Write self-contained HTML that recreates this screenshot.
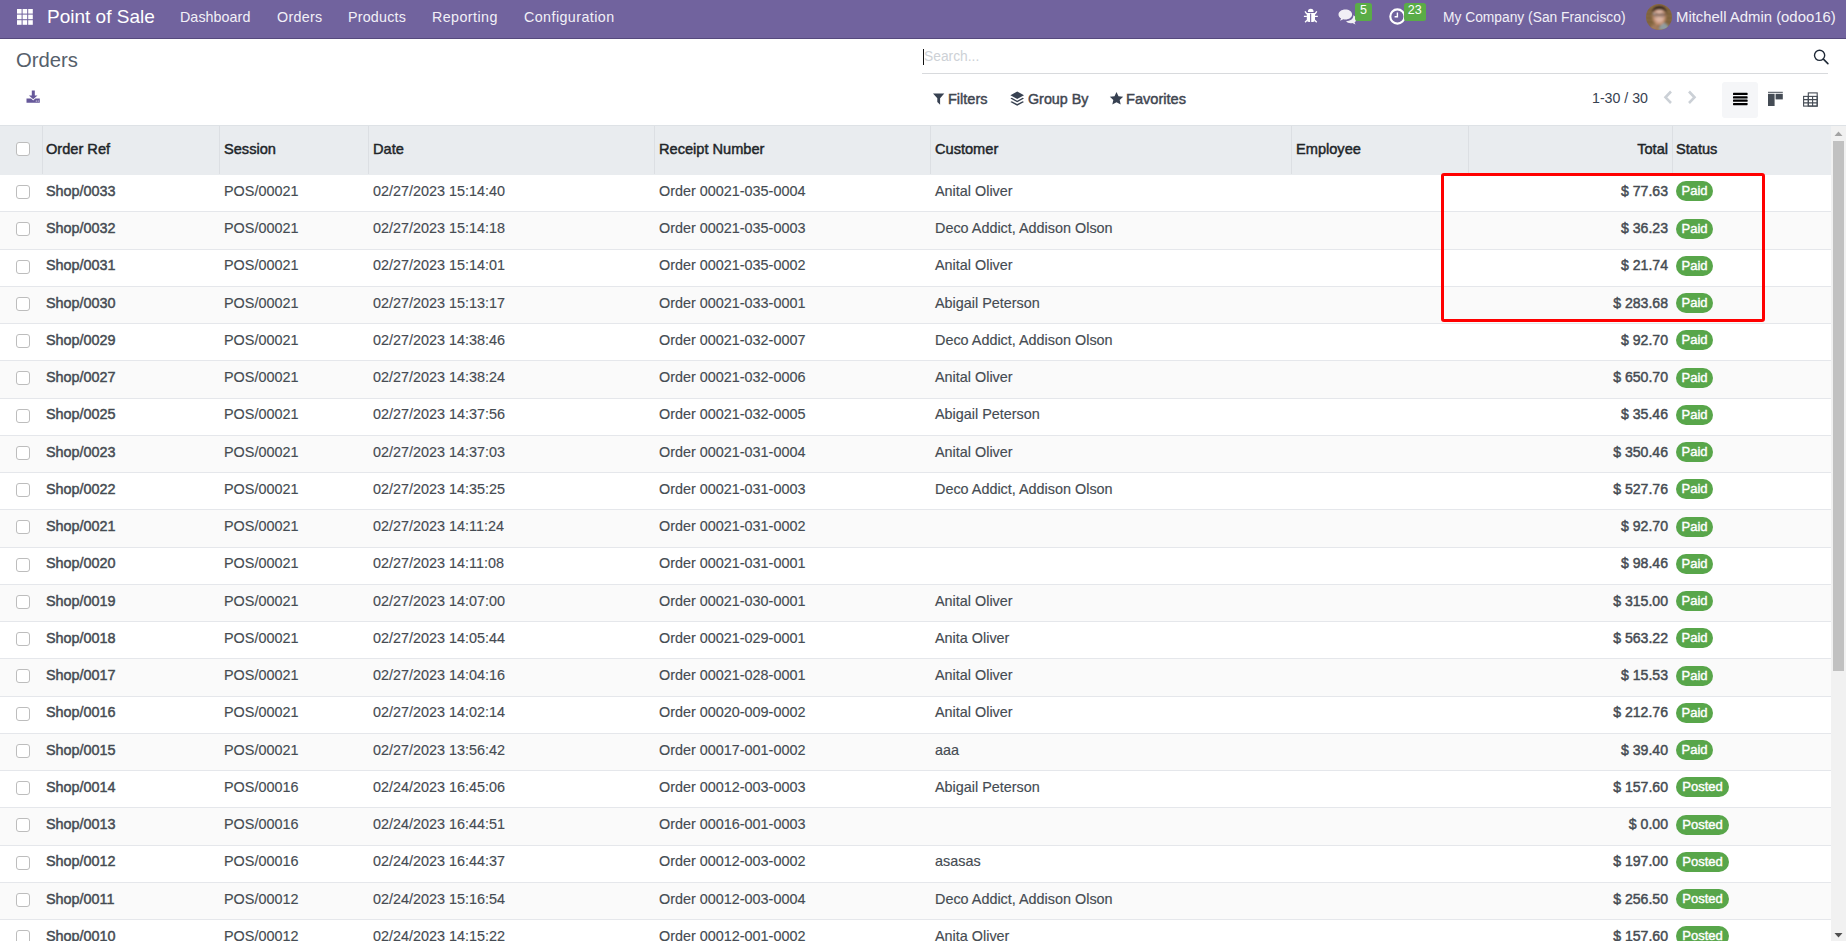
<!DOCTYPE html><html><head><meta charset="utf-8"><style>
*{box-sizing:border-box;margin:0;padding:0}
html,body{width:1846px;height:941px;overflow:hidden;background:#fff;font-family:"Liberation Sans",sans-serif;color:#374151}
.abs{position:absolute}
.nav{position:absolute;left:0;top:0;width:1846px;height:39px;background:#71639e;border-bottom:1px solid #55497d}
.nt{position:absolute;color:#fff;white-space:nowrap;line-height:1}
.cp{position:absolute;left:0;top:38px;width:1846px;height:87px;background:#fff}
.t{position:absolute;white-space:nowrap;line-height:1}
.hdr{position:absolute;left:0;top:125px;width:1831px;height:50px;background:#e9ecef;border-top:1px solid #dee2e6}
.hdiv{position:absolute;top:126px;height:48px;width:1px;background:#dcdfe3}
.row{position:absolute;left:0;width:1831px;border-bottom:1px solid #e5e7eb}
.cb{position:absolute;left:16px;width:14px;height:14px;border:1px solid #bdbdbd;border-radius:3px;background:#fff}
.c{position:absolute;white-space:nowrap;font-size:14.4px;line-height:1;color:#454b52;-webkit-text-stroke:0.15px #454b52}
.b{font-weight:700}
.m{font-weight:400;-webkit-text-stroke:0.45px currentColor}
.badge{position:absolute;left:1676px;height:20px;border-radius:10px;background:#58a64a;color:#fff;font-weight:400;-webkit-text-stroke:0.4px #fff;font-size:13px;line-height:20px;text-align:center}
</style></head><body>
<div class="nav">
<svg class="abs" style="left:17px;top:9px" width="16" height="16" viewBox="0 0 16 16" fill="#fff"><rect x="0.0" y="0.0" width="4.6" height="4.6"/><rect x="5.6" y="0.0" width="4.6" height="4.6"/><rect x="11.2" y="0.0" width="4.6" height="4.6"/><rect x="0.0" y="5.6" width="4.6" height="4.6"/><rect x="5.6" y="5.6" width="4.6" height="4.6"/><rect x="11.2" y="5.6" width="4.6" height="4.6"/><rect x="0.0" y="11.2" width="4.6" height="4.6"/><rect x="5.6" y="11.2" width="4.6" height="4.6"/><rect x="11.2" y="11.2" width="4.6" height="4.6"/></svg>
<div class="nt" style="left:47px;top:7px;font-size:19px">Point of Sale</div>
<div class="nt" style="left:180px;top:10px;font-size:14.3px;letter-spacing:0.05px;color:#f2f0f7">Dashboard</div>
<div class="nt" style="left:277px;top:10px;font-size:14.3px;letter-spacing:0.3px;color:#f2f0f7">Orders</div>
<div class="nt" style="left:348px;top:10px;font-size:14.3px;letter-spacing:0.2px;color:#f2f0f7">Products</div>
<div class="nt" style="left:432px;top:10px;font-size:14.3px;letter-spacing:0.42px;color:#f2f0f7">Reporting</div>
<div class="nt" style="left:524px;top:10px;font-size:14.3px;letter-spacing:0.42px;color:#f2f0f7">Configuration</div>
</div>
<div class="nav" style="background:transparent;border:none">
<svg class="abs" style="left:1300px;top:4px" width="22" height="22" viewBox="0 0 22 22" fill="#fff"><path d="M7.9 8.1a2.85 3.3 0 0 1 5.7 0z"/><path d="M6.8 8.9h8.2v6.9q0 2.2-2.2 2.2h-3.8q-2.2 0-2.2-2.2z"/><rect x="10.1" y="9.6" width="1.1" height="8.4" fill="#71639e"/><path d="M6.9 10L5 7.4M14.9 10l1.9-2.6M3.9 12.4h3M14.8 12.4h3M7 16.3l-1.9 2M14.8 16.3l1.9 2" stroke="#fff" stroke-width="1.3" fill="none"/></svg>
<svg class="abs" style="left:1338px;top:9px" width="19" height="16" viewBox="0 0 19 16"><path d="M7.3 0.5C3.5 0.5 0.5 2.7 0.5 5.5c0 1.6 1 3 2.6 3.9L2 11.8l3.4-1.6c0.6 0.1 1.2 0.2 1.9 0.2 3.8 0 6.8-2.2 6.8-5S11.1 0.5 7.3 0.5z" fill="#f1eff5"/><path d="M15.2 6.2c0.1 0.3 0.1 0.6 0.1 0.9 0 3.1-3.3 5.1-7.3 5.2 1 1.2 2.8 2 4.7 2 0.6 0 1.1-0.1 1.6-0.2l3.2 1.5-1-2.2c1.2-0.8 1.9-1.9 1.9-3.1 0-1.7-1.3-3.2-3.2-4.1z" fill="#f1eff5"/></svg>
<div class="abs" style="left:1355px;top:3px;width:17px;height:17.5px;background:#5aac47;border-radius:2.5px;color:#fff;font-size:12.5px;font-weight:400;text-align:center;line-height:15.5px">5</div>
<svg class="abs" style="left:1389px;top:8px" width="17" height="17" viewBox="0 0 17 17"><circle cx="8.4" cy="8.5" r="7.1" fill="none" stroke="#fff" stroke-width="2.1"/><path d="M8.4 4.5v4.3H5.6" fill="none" stroke="#fff" stroke-width="1.4"/></svg>
<div class="abs" style="left:1404px;top:3px;width:21.5px;height:17.5px;background:#5aac47;border-radius:2.5px;color:#fff;font-size:12.5px;text-align:center;line-height:15.5px">23</div>
<div class="nt" style="left:1443px;top:11px;font-size:13.8px;color:#f2f0f7">My Company (San Francisco)</div>
<svg class="abs" style="left:1646px;top:4px" width="26" height="26" viewBox="0 0 26 26"><defs><clipPath id="av"><circle cx="13" cy="13" r="13"/></clipPath><filter id="bl" x="-10%" y="-10%" width="120%" height="120%"><feGaussianBlur stdDeviation="0.9"/></filter></defs><g clip-path="url(#av)"><rect width="26" height="26" fill="#8a6b42"/><g filter="url(#bl)"><path d="M0 6h26M0 10h26M0 14h26M0 18h26M0 22h26" stroke="#6a5134" stroke-width="1"/><path d="M17 18c2 1 5 2 7 8H11z" fill="#8f9ca0"/><path d="M3 26c1-4 4-6 8-6l3 6z" fill="#a27a5c"/><ellipse cx="13.2" cy="12.6" rx="6.6" ry="8.6" fill="#c49276"/><ellipse cx="13.4" cy="12" rx="4.6" ry="6.5" fill="#dcb4a2"/><path d="M6.3 9.5C6 4.5 9 2.2 13.4 2.2S21 4.5 20.6 10c-1-2.8-3.2-4.4-7-4.4S7.6 7 6.3 9.5z" fill="#2f231d"/><path d="M7.2 10.6h12.6" stroke="#4a3a34" stroke-width="1"/><rect x="8.2" y="9.8" width="4.3" height="2.8" rx="1" fill="none" stroke="#5a463e" stroke-width="0.8"/><rect x="14" y="9.8" width="4.3" height="2.8" rx="1" fill="none" stroke="#5a463e" stroke-width="0.8"/><circle cx="8" cy="9.6" r="0.9" fill="#c8c8d0"/></g></g></svg>
<div class="nt" style="left:1676px;top:10px;font-size:14.9px;color:#f2f0f7">Mitchell Admin (odoo16)</div>
</div>
<div class="t" style="left:16px;top:50px;font-size:20.3px;color:#56606b">Orders</div>
<svg class="abs" style="left:26px;top:90px" width="14" height="13" viewBox="0 0 14 13" fill="#66589a"><rect x="5.8" y="0.5" width="3" height="5.5"/><path d="M2.9 5.6h8.6L7.2 9.2z"/><path d="M0.5 8.6h4.6l2.1 1.8 2.1-1.8h4.5v4.2H0.5z"/><circle cx="10.3" cy="11" r="0.6" fill="#fff"/><circle cx="12.2" cy="11" r="0.6" fill="#fff"/></svg>
<div class="abs" style="left:922px;top:73px;width:906px;height:1px;background:#d8dadd"></div>
<div class="abs" style="left:923px;top:49px;width:1px;height:16px;background:#111"></div>
<div class="t" style="left:924px;top:50px;font-size:13.8px;color:#cdd1d6">Search...</div>
<svg class="abs" style="left:1812px;top:48px" width="18" height="18" viewBox="0 0 18 18"><circle cx="7.6" cy="7.3" r="5.1" fill="none" stroke="#1f2937" stroke-width="1.4"/><path d="M11.4 11.1l4.5 4.5" stroke="#1f2937" stroke-width="1.6" stroke-linecap="round"/></svg>
<svg class="abs" style="left:933px;top:93px" width="12" height="12" viewBox="0 0 12 12" fill="#374151"><path d="M0 0.6h11.3L7.1 5.3v6.4L4.3 9.1V5.3z"/></svg>
<div class="t m" style="left:948px;top:92px;font-size:14.5px;color:#3f4650">Filters</div>
<svg class="abs" style="left:1010px;top:91px" width="15" height="16" viewBox="0 0 15 16" fill="#374151"><path d="M7.2 0.5l6.8 3.7-6.8 3.7L0.4 4.2z"/><path d="M1.8 6.8L7.2 9.7l5.4-2.9 1.4 0.8-6.8 3.7L0.4 7.6z"/><path d="M1.8 10.2l5.4 2.9 5.4-2.9 1.4 0.8-6.8 3.7L0.4 11z"/></svg>
<div class="t m" style="left:1028px;top:92px;font-size:14.3px;color:#3f4650">Group By</div>
<svg class="abs" style="left:1109px;top:91px" width="15" height="15" viewBox="0 0 24 24" fill="#374151"><path d="M12 1.5l3.2 6.9 7.5 0.8-5.6 5.1 1.6 7.4L12 17.9l-6.7 3.8 1.6-7.4-5.6-5.1 7.5-0.8z"/></svg>
<div class="t m" style="left:1126px;top:92px;font-size:14.6px;color:#3f4650">Favorites</div>
<div class="t" style="left:1592px;top:91px;font-size:14.2px;color:#374151">1-30 / 30</div>
<svg class="abs" style="left:1663px;top:90px" width="35" height="15" viewBox="0 0 35 15" fill="none" stroke="#cbd0d6" stroke-width="2.6"><path d="M8 1.5L2.5 7.3 8 13"/><path d="M26 1.5l5.5 5.8L26 13"/></svg>
<div class="abs" style="left:1722px;top:82px;width:36px;height:36px;background:#f5f6f8;border-radius:3px"></div>
<svg class="abs" style="left:1733px;top:92px" width="15" height="14" viewBox="0 0 15 14" fill="#000"><rect x="0" y="0.8" width="14.6" height="2.2" rx="0.6"/><rect x="0" y="4.3" width="14.6" height="2.2" rx="0.6"/><rect x="0" y="7.6" width="14.6" height="2.2" rx="0.6"/><rect x="0" y="11" width="14.6" height="2.2" rx="0.6"/></svg>
<svg class="abs" style="left:1767px;top:91px" width="17" height="16" viewBox="0 0 17 16" fill="#454c55"><rect x="1" y="0.8" width="14.8" height="1"/><rect x="1" y="2.8" width="6.6" height="12.2"/><rect x="8.6" y="2.8" width="7.2" height="5.6"/></svg>
<svg class="abs" style="left:1803px;top:92px" width="15" height="15" viewBox="0 0 15 15" fill="none" stroke="#454c55" stroke-width="1.1"><rect x="5.3" y="0.9" width="8.9" height="13.2"/><rect x="0.6" y="4.4" width="13.6" height="9.7"/><path d="M0.6 7.6h13.6M0.6 10.9h13.6M5.3 4.4v9.7M9.6 4.4v9.7"/></svg>
<div class="hdr"></div>
<div class="abs" style="left:1831px;top:125px;width:15px;height:1px;background:#dee2e6"></div>
<div class="hdiv" style="left:42px"></div>
<div class="hdiv" style="left:219px"></div>
<div class="hdiv" style="left:368px"></div>
<div class="hdiv" style="left:654px"></div>
<div class="hdiv" style="left:930px"></div>
<div class="hdiv" style="left:1291px"></div>
<div class="hdiv" style="left:1468px"></div>
<div class="hdiv" style="left:1672px"></div>
<div class="cb" style="top:142px"></div>
<div class="t m" style="left:46px;top:142px;font-size:14.6px;color:#212529">Order Ref</div>
<div class="t m" style="left:224px;top:142px;font-size:14.6px;color:#212529">Session</div>
<div class="t m" style="left:373px;top:142px;font-size:14.6px;color:#212529">Date</div>
<div class="t m" style="left:659px;top:142px;font-size:14.6px;color:#212529">Receipt Number</div>
<div class="t m" style="left:935px;top:142px;font-size:14.6px;color:#212529">Customer</div>
<div class="t m" style="left:1296px;top:142px;font-size:14.6px;color:#212529">Employee</div>
<div class="t m" style="left:1676px;top:142px;font-size:14.6px;color:#212529">Status</div>
<div class="t m" style="left:1568px;width:100px;text-align:right;top:142px;font-size:14.6px;color:#212529">Total</div>
<div class="row" style="top:175.0px;height:37.25px;background:#fff"></div>
<div class="cb" style="top:185.00px"></div>
<div class="c m" style="left:46px;top:183.80px;font-size:14.4px">Shop/0033</div>
<div class="c" style="left:224px;top:183.80px">POS/00021</div>
<div class="c" style="left:373px;top:183.80px">02/27/2023 15:14:40</div>
<div class="c" style="left:659px;top:183.80px">Order 00021-035-0004</div>
<div class="c" style="left:935px;top:183.80px">Anital Oliver</div>
<div class="c m" style="left:1518px;width:150px;text-align:right;font-size:14.1px;top:183.80px">$ 77.63</div>
<div class="badge" style="top:181.30px;width:37px">Paid</div>
<div class="row" style="top:212.25px;height:37.25px;background:#fafafa"></div>
<div class="cb" style="top:222.25px"></div>
<div class="c m" style="left:46px;top:221.05px;font-size:14.4px">Shop/0032</div>
<div class="c" style="left:224px;top:221.05px">POS/00021</div>
<div class="c" style="left:373px;top:221.05px">02/27/2023 15:14:18</div>
<div class="c" style="left:659px;top:221.05px">Order 00021-035-0003</div>
<div class="c" style="left:935px;top:221.05px">Deco Addict, Addison Olson</div>
<div class="c m" style="left:1518px;width:150px;text-align:right;font-size:14.1px;top:221.05px">$ 36.23</div>
<div class="badge" style="top:218.55px;width:37px">Paid</div>
<div class="row" style="top:249.5px;height:37.25px;background:#fff"></div>
<div class="cb" style="top:259.50px"></div>
<div class="c m" style="left:46px;top:258.30px;font-size:14.4px">Shop/0031</div>
<div class="c" style="left:224px;top:258.30px">POS/00021</div>
<div class="c" style="left:373px;top:258.30px">02/27/2023 15:14:01</div>
<div class="c" style="left:659px;top:258.30px">Order 00021-035-0002</div>
<div class="c" style="left:935px;top:258.30px">Anital Oliver</div>
<div class="c m" style="left:1518px;width:150px;text-align:right;font-size:14.1px;top:258.30px">$ 21.74</div>
<div class="badge" style="top:255.80px;width:37px">Paid</div>
<div class="row" style="top:286.75px;height:37.25px;background:#fafafa"></div>
<div class="cb" style="top:296.75px"></div>
<div class="c m" style="left:46px;top:295.55px;font-size:14.4px">Shop/0030</div>
<div class="c" style="left:224px;top:295.55px">POS/00021</div>
<div class="c" style="left:373px;top:295.55px">02/27/2023 15:13:17</div>
<div class="c" style="left:659px;top:295.55px">Order 00021-033-0001</div>
<div class="c" style="left:935px;top:295.55px">Abigail Peterson</div>
<div class="c m" style="left:1518px;width:150px;text-align:right;font-size:14.1px;top:295.55px">$ 283.68</div>
<div class="badge" style="top:293.05px;width:37px">Paid</div>
<div class="row" style="top:324.0px;height:37.25px;background:#fff"></div>
<div class="cb" style="top:334.00px"></div>
<div class="c m" style="left:46px;top:332.80px;font-size:14.4px">Shop/0029</div>
<div class="c" style="left:224px;top:332.80px">POS/00021</div>
<div class="c" style="left:373px;top:332.80px">02/27/2023 14:38:46</div>
<div class="c" style="left:659px;top:332.80px">Order 00021-032-0007</div>
<div class="c" style="left:935px;top:332.80px">Deco Addict, Addison Olson</div>
<div class="c m" style="left:1518px;width:150px;text-align:right;font-size:14.1px;top:332.80px">$ 92.70</div>
<div class="badge" style="top:330.30px;width:37px">Paid</div>
<div class="row" style="top:361.25px;height:37.25px;background:#fafafa"></div>
<div class="cb" style="top:371.25px"></div>
<div class="c m" style="left:46px;top:370.05px;font-size:14.4px">Shop/0027</div>
<div class="c" style="left:224px;top:370.05px">POS/00021</div>
<div class="c" style="left:373px;top:370.05px">02/27/2023 14:38:24</div>
<div class="c" style="left:659px;top:370.05px">Order 00021-032-0006</div>
<div class="c" style="left:935px;top:370.05px">Anital Oliver</div>
<div class="c m" style="left:1518px;width:150px;text-align:right;font-size:14.1px;top:370.05px">$ 650.70</div>
<div class="badge" style="top:367.55px;width:37px">Paid</div>
<div class="row" style="top:398.5px;height:37.25px;background:#fff"></div>
<div class="cb" style="top:408.50px"></div>
<div class="c m" style="left:46px;top:407.30px;font-size:14.4px">Shop/0025</div>
<div class="c" style="left:224px;top:407.30px">POS/00021</div>
<div class="c" style="left:373px;top:407.30px">02/27/2023 14:37:56</div>
<div class="c" style="left:659px;top:407.30px">Order 00021-032-0005</div>
<div class="c" style="left:935px;top:407.30px">Abigail Peterson</div>
<div class="c m" style="left:1518px;width:150px;text-align:right;font-size:14.1px;top:407.30px">$ 35.46</div>
<div class="badge" style="top:404.80px;width:37px">Paid</div>
<div class="row" style="top:435.75px;height:37.25px;background:#fafafa"></div>
<div class="cb" style="top:445.75px"></div>
<div class="c m" style="left:46px;top:444.55px;font-size:14.4px">Shop/0023</div>
<div class="c" style="left:224px;top:444.55px">POS/00021</div>
<div class="c" style="left:373px;top:444.55px">02/27/2023 14:37:03</div>
<div class="c" style="left:659px;top:444.55px">Order 00021-031-0004</div>
<div class="c" style="left:935px;top:444.55px">Anital Oliver</div>
<div class="c m" style="left:1518px;width:150px;text-align:right;font-size:14.1px;top:444.55px">$ 350.46</div>
<div class="badge" style="top:442.05px;width:37px">Paid</div>
<div class="row" style="top:473.0px;height:37.25px;background:#fff"></div>
<div class="cb" style="top:483.00px"></div>
<div class="c m" style="left:46px;top:481.80px;font-size:14.4px">Shop/0022</div>
<div class="c" style="left:224px;top:481.80px">POS/00021</div>
<div class="c" style="left:373px;top:481.80px">02/27/2023 14:35:25</div>
<div class="c" style="left:659px;top:481.80px">Order 00021-031-0003</div>
<div class="c" style="left:935px;top:481.80px">Deco Addict, Addison Olson</div>
<div class="c m" style="left:1518px;width:150px;text-align:right;font-size:14.1px;top:481.80px">$ 527.76</div>
<div class="badge" style="top:479.30px;width:37px">Paid</div>
<div class="row" style="top:510.25px;height:37.25px;background:#fafafa"></div>
<div class="cb" style="top:520.25px"></div>
<div class="c m" style="left:46px;top:519.05px;font-size:14.4px">Shop/0021</div>
<div class="c" style="left:224px;top:519.05px">POS/00021</div>
<div class="c" style="left:373px;top:519.05px">02/27/2023 14:11:24</div>
<div class="c" style="left:659px;top:519.05px">Order 00021-031-0002</div>
<div class="c m" style="left:1518px;width:150px;text-align:right;font-size:14.1px;top:519.05px">$ 92.70</div>
<div class="badge" style="top:516.55px;width:37px">Paid</div>
<div class="row" style="top:547.5px;height:37.25px;background:#fff"></div>
<div class="cb" style="top:557.50px"></div>
<div class="c m" style="left:46px;top:556.30px;font-size:14.4px">Shop/0020</div>
<div class="c" style="left:224px;top:556.30px">POS/00021</div>
<div class="c" style="left:373px;top:556.30px">02/27/2023 14:11:08</div>
<div class="c" style="left:659px;top:556.30px">Order 00021-031-0001</div>
<div class="c m" style="left:1518px;width:150px;text-align:right;font-size:14.1px;top:556.30px">$ 98.46</div>
<div class="badge" style="top:553.80px;width:37px">Paid</div>
<div class="row" style="top:584.75px;height:37.25px;background:#fafafa"></div>
<div class="cb" style="top:594.75px"></div>
<div class="c m" style="left:46px;top:593.55px;font-size:14.4px">Shop/0019</div>
<div class="c" style="left:224px;top:593.55px">POS/00021</div>
<div class="c" style="left:373px;top:593.55px">02/27/2023 14:07:00</div>
<div class="c" style="left:659px;top:593.55px">Order 00021-030-0001</div>
<div class="c" style="left:935px;top:593.55px">Anital Oliver</div>
<div class="c m" style="left:1518px;width:150px;text-align:right;font-size:14.1px;top:593.55px">$ 315.00</div>
<div class="badge" style="top:591.05px;width:37px">Paid</div>
<div class="row" style="top:622.0px;height:37.25px;background:#fff"></div>
<div class="cb" style="top:632.00px"></div>
<div class="c m" style="left:46px;top:630.80px;font-size:14.4px">Shop/0018</div>
<div class="c" style="left:224px;top:630.80px">POS/00021</div>
<div class="c" style="left:373px;top:630.80px">02/27/2023 14:05:44</div>
<div class="c" style="left:659px;top:630.80px">Order 00021-029-0001</div>
<div class="c" style="left:935px;top:630.80px">Anita Oliver</div>
<div class="c m" style="left:1518px;width:150px;text-align:right;font-size:14.1px;top:630.80px">$ 563.22</div>
<div class="badge" style="top:628.30px;width:37px">Paid</div>
<div class="row" style="top:659.25px;height:37.25px;background:#fafafa"></div>
<div class="cb" style="top:669.25px"></div>
<div class="c m" style="left:46px;top:668.05px;font-size:14.4px">Shop/0017</div>
<div class="c" style="left:224px;top:668.05px">POS/00021</div>
<div class="c" style="left:373px;top:668.05px">02/27/2023 14:04:16</div>
<div class="c" style="left:659px;top:668.05px">Order 00021-028-0001</div>
<div class="c" style="left:935px;top:668.05px">Anital Oliver</div>
<div class="c m" style="left:1518px;width:150px;text-align:right;font-size:14.1px;top:668.05px">$ 15.53</div>
<div class="badge" style="top:665.55px;width:37px">Paid</div>
<div class="row" style="top:696.5px;height:37.25px;background:#fff"></div>
<div class="cb" style="top:706.50px"></div>
<div class="c m" style="left:46px;top:705.30px;font-size:14.4px">Shop/0016</div>
<div class="c" style="left:224px;top:705.30px">POS/00021</div>
<div class="c" style="left:373px;top:705.30px">02/27/2023 14:02:14</div>
<div class="c" style="left:659px;top:705.30px">Order 00020-009-0002</div>
<div class="c" style="left:935px;top:705.30px">Anital Oliver</div>
<div class="c m" style="left:1518px;width:150px;text-align:right;font-size:14.1px;top:705.30px">$ 212.76</div>
<div class="badge" style="top:702.80px;width:37px">Paid</div>
<div class="row" style="top:733.75px;height:37.25px;background:#fafafa"></div>
<div class="cb" style="top:743.75px"></div>
<div class="c m" style="left:46px;top:742.55px;font-size:14.4px">Shop/0015</div>
<div class="c" style="left:224px;top:742.55px">POS/00021</div>
<div class="c" style="left:373px;top:742.55px">02/27/2023 13:56:42</div>
<div class="c" style="left:659px;top:742.55px">Order 00017-001-0002</div>
<div class="c" style="left:935px;top:742.55px">aaa</div>
<div class="c m" style="left:1518px;width:150px;text-align:right;font-size:14.1px;top:742.55px">$ 39.40</div>
<div class="badge" style="top:740.05px;width:37px">Paid</div>
<div class="row" style="top:771.0px;height:37.25px;background:#fff"></div>
<div class="cb" style="top:781.00px"></div>
<div class="c m" style="left:46px;top:779.80px;font-size:14.4px">Shop/0014</div>
<div class="c" style="left:224px;top:779.80px">POS/00016</div>
<div class="c" style="left:373px;top:779.80px">02/24/2023 16:45:06</div>
<div class="c" style="left:659px;top:779.80px">Order 00012-003-0003</div>
<div class="c" style="left:935px;top:779.80px">Abigail Peterson</div>
<div class="c m" style="left:1518px;width:150px;text-align:right;font-size:14.1px;top:779.80px">$ 157.60</div>
<div class="badge" style="top:777.30px;width:53px">Posted</div>
<div class="row" style="top:808.25px;height:37.25px;background:#fafafa"></div>
<div class="cb" style="top:818.25px"></div>
<div class="c m" style="left:46px;top:817.05px;font-size:14.4px">Shop/0013</div>
<div class="c" style="left:224px;top:817.05px">POS/00016</div>
<div class="c" style="left:373px;top:817.05px">02/24/2023 16:44:51</div>
<div class="c" style="left:659px;top:817.05px">Order 00016-001-0003</div>
<div class="c m" style="left:1518px;width:150px;text-align:right;font-size:14.1px;top:817.05px">$ 0.00</div>
<div class="badge" style="top:814.55px;width:53px">Posted</div>
<div class="row" style="top:845.5px;height:37.25px;background:#fff"></div>
<div class="cb" style="top:855.50px"></div>
<div class="c m" style="left:46px;top:854.30px;font-size:14.4px">Shop/0012</div>
<div class="c" style="left:224px;top:854.30px">POS/00016</div>
<div class="c" style="left:373px;top:854.30px">02/24/2023 16:44:37</div>
<div class="c" style="left:659px;top:854.30px">Order 00012-003-0002</div>
<div class="c" style="left:935px;top:854.30px">asasas</div>
<div class="c m" style="left:1518px;width:150px;text-align:right;font-size:14.1px;top:854.30px">$ 197.00</div>
<div class="badge" style="top:851.80px;width:53px">Posted</div>
<div class="row" style="top:882.75px;height:37.25px;background:#fafafa"></div>
<div class="cb" style="top:892.75px"></div>
<div class="c m" style="left:46px;top:891.55px;font-size:14.4px">Shop/0011</div>
<div class="c" style="left:224px;top:891.55px">POS/00012</div>
<div class="c" style="left:373px;top:891.55px">02/24/2023 15:16:54</div>
<div class="c" style="left:659px;top:891.55px">Order 00012-003-0004</div>
<div class="c" style="left:935px;top:891.55px">Deco Addict, Addison Olson</div>
<div class="c m" style="left:1518px;width:150px;text-align:right;font-size:14.1px;top:891.55px">$ 256.50</div>
<div class="badge" style="top:889.05px;width:53px">Posted</div>
<div class="row" style="top:920.0px;height:37.25px;background:#fff"></div>
<div class="cb" style="top:930.00px"></div>
<div class="c m" style="left:46px;top:928.80px;font-size:14.4px">Shop/0010</div>
<div class="c" style="left:224px;top:928.80px">POS/00012</div>
<div class="c" style="left:373px;top:928.80px">02/24/2023 14:15:22</div>
<div class="c" style="left:659px;top:928.80px">Order 00012-001-0002</div>
<div class="c" style="left:935px;top:928.80px">Anita Oliver</div>
<div class="c m" style="left:1518px;width:150px;text-align:right;font-size:14.1px;top:928.80px">$ 157.60</div>
<div class="badge" style="top:926.30px;width:53px">Posted</div>
<div class="abs" style="left:1441px;top:173px;width:324px;height:148.5px;border:3px solid #f00;border-radius:3px"></div>
<div class="abs" style="left:1831px;top:126px;width:15px;height:815px;background:#f1f1f1"></div>
<svg class="abs" style="left:1831px;top:126px" width="15" height="15" viewBox="0 0 15 15"><path d="M3.5 10h8L7.5 5.5z" fill="#a3a3a3"/></svg>
<div class="abs" style="left:1833px;top:141px;width:11px;height:530px;background:#c1c1c1"></div>
<svg class="abs" style="left:1831px;top:928px" width="15" height="15" viewBox="0 0 15 15"><path d="M3.5 5h8L7.5 9.5z" fill="#505050"/></svg>
</body></html>
